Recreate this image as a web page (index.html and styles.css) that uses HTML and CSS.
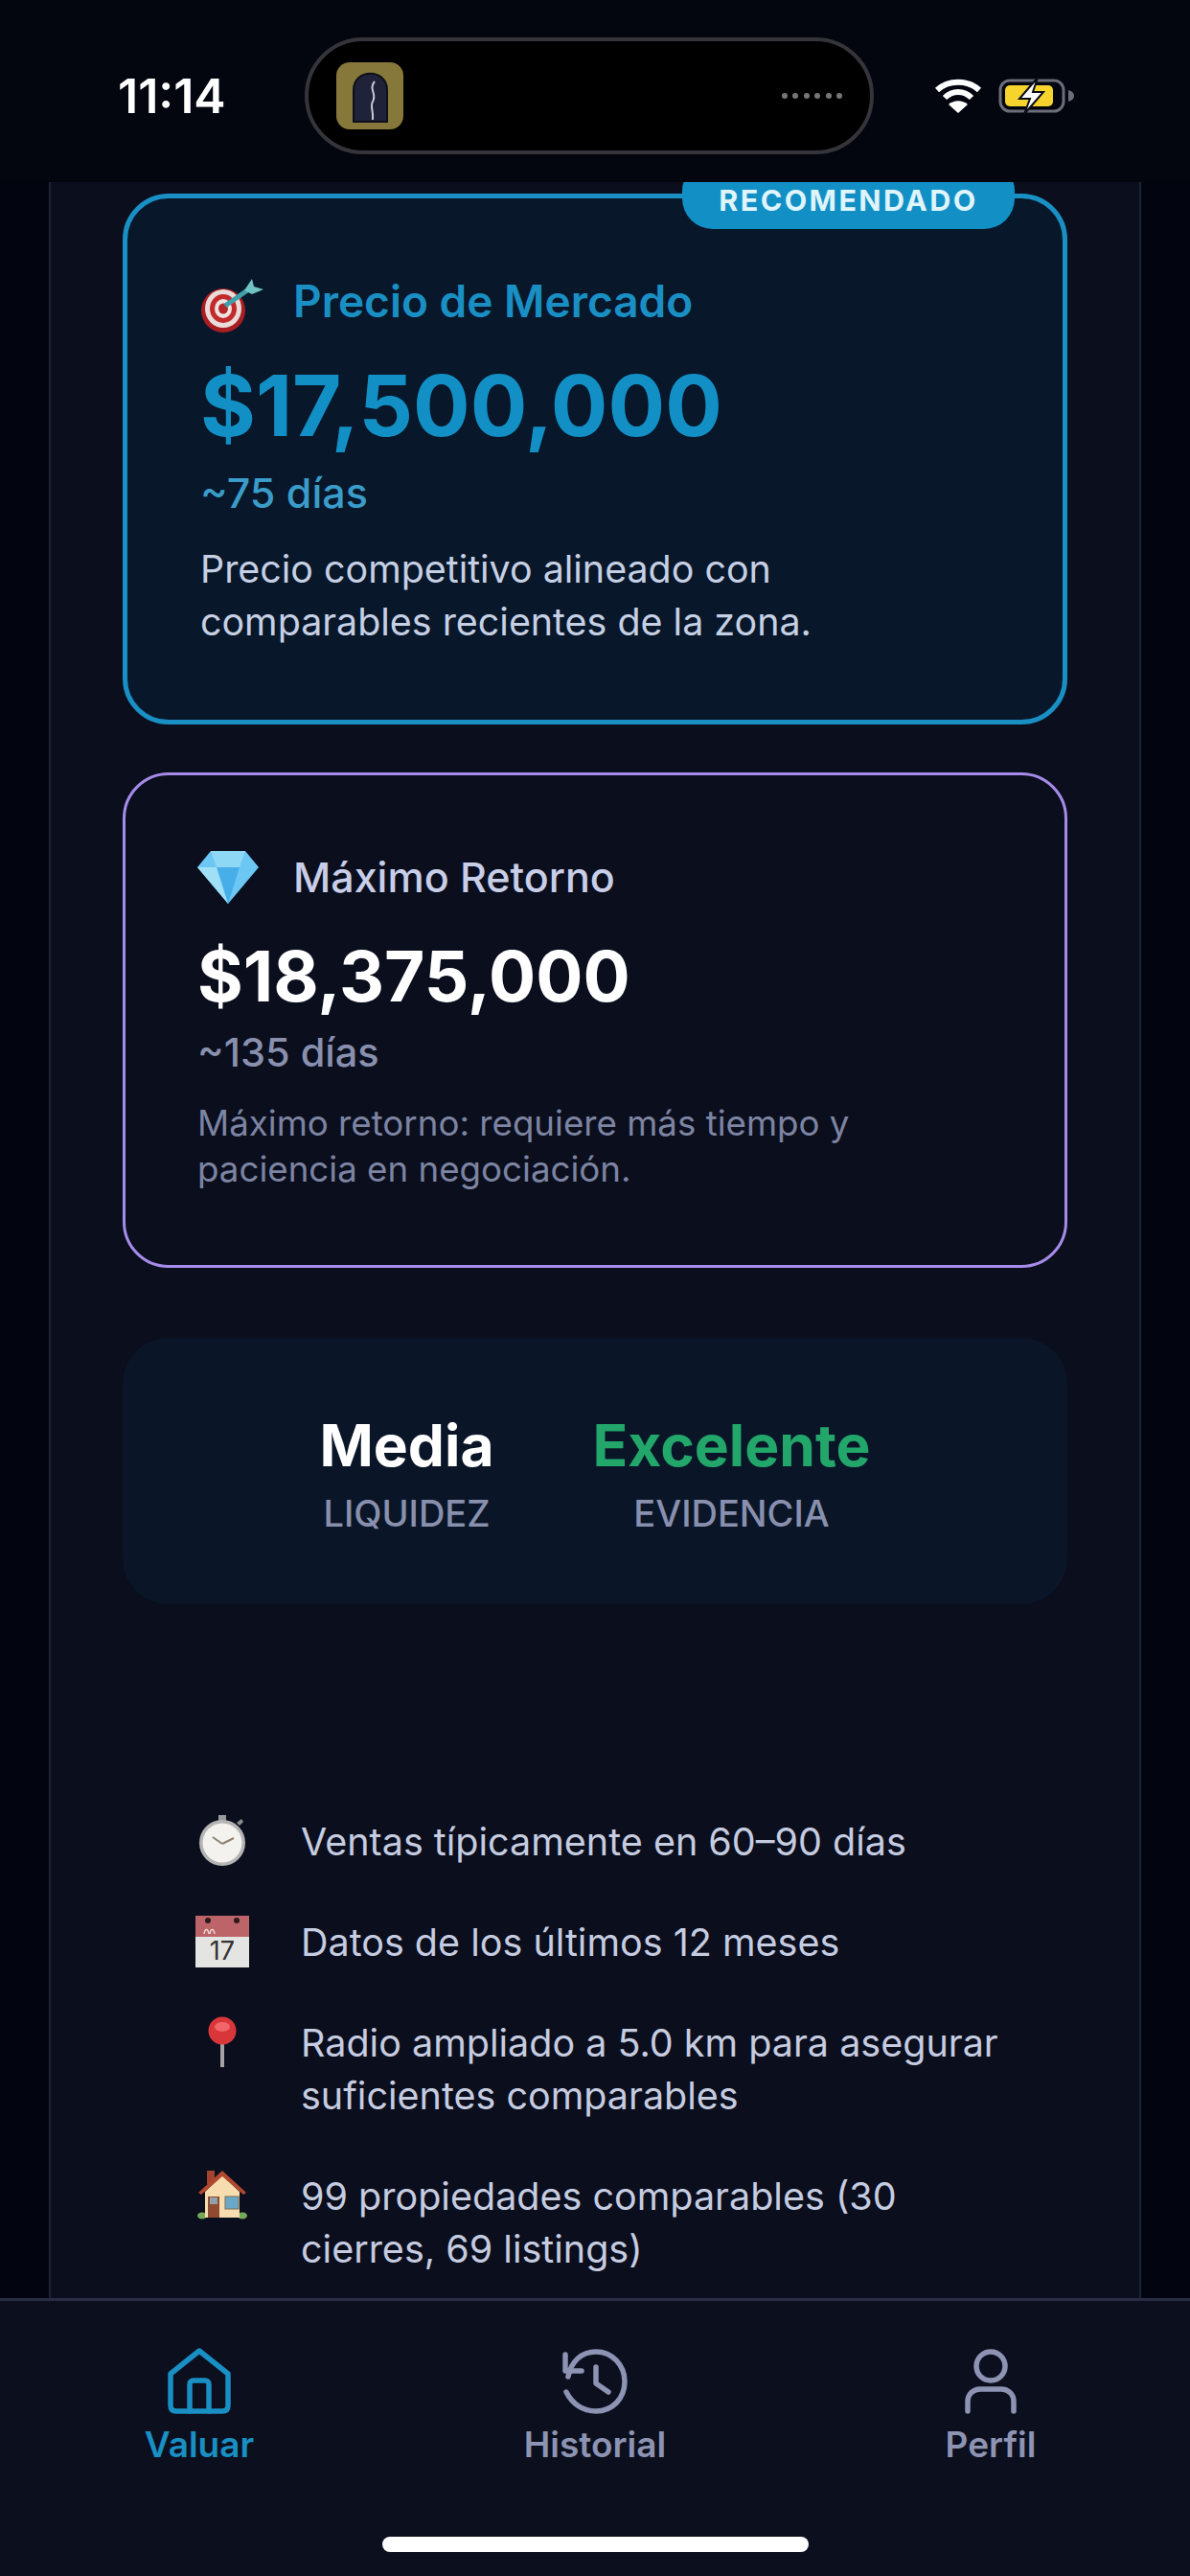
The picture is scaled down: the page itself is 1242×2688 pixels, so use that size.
FILE: index.html
```html
<!DOCTYPE html>
<html lang="es">
<head>
    <meta charset="UTF-8">
    <meta name="viewport" content="width=device-width, initial-scale=1.0">
    <title>Valuar</title>
    <link rel="stylesheet" href="styles.css">
</head>
<body>

<header class="status-bar">
    <span class="time">11:14</span>
    <div class="island">
        <div class="app-icon">
            <svg viewBox="0 0 70 70" width="70" height="70">
                <path d="M18 62V29C18 6 53 6 53 29V62Z" fill="#1f2238" stroke="#0e0f1c" stroke-width="2"/>
                <path d="M40 20C33 28 43 33 38 41C35 46 39 50 38 60" fill="none" stroke="#c9cbd6" stroke-width="2"/>
            </svg>
        </div>
        <div class="island-dots"><i></i><i></i><i></i><i></i><i></i><i></i></div>
    </div>
    <div class="status-icons">
        <svg viewBox="0 0 50 38" width="50" height="38">
            <path d="M3 13C15 2 35 2 47 13" fill="none" stroke="#fff" stroke-width="6"/>
            <path d="M11 21C19 13 31 13 39 21" fill="none" stroke="#fff" stroke-width="6"/>
            <path d="M25 37L15 28C21 23 29 23 35 28Z" fill="#fff"/>
        </svg>
        <svg viewBox="0 0 80 40" width="80" height="40">
            <rect x="2" y="4" width="66" height="32" rx="10" fill="none" stroke="#6b6d78" stroke-width="3"/>
            <rect x="7" y="9" width="50" height="22" rx="5" fill="#f6d32d"/>
            <path d="M73 14C77 15 79 17 79 20C79 23 77 25 73 26Z" fill="#6b6d78"/>
            <path d="M41 1L22 23H33L27 39L47 16H36Z" fill="#fff" stroke="#0a0c18" stroke-width="2"/>
        </svg>
    </div>
</header>

<main class="content">
    <section class="card card-market">
        <span class="badge">RECOMENDADO</span>
        <div class="card-head">
            <svg class="card-emoji emoji-target" viewBox="0 0 66 56" width="66" height="56">
                <circle cx="24" cy="33" r="23" fill="#a81e22"/>
                <ellipse cx="24" cy="31" rx="19" ry="20" fill="#e9dcd8"/>
                <ellipse cx="24" cy="31" rx="14" ry="15" fill="#c22a2c"/>
                <ellipse cx="24" cy="31" rx="9" ry="10" fill="#efe3df"/>
                <ellipse cx="24" cy="31" rx="5" ry="5.5" fill="#b3262a"/>
                <path d="M26 28L52 10" stroke="#3f9ea8" stroke-width="5"/>
                <path d="M46 12L54 0L56 8L66 11L54 16Z" fill="#6fc3c4"/>
            </svg>
            <h2 class="card-title">Precio de Mercado</h2>
        </div>
        <p class="price">$17,500,000</p>
        <p class="days">~75 días</p>
        <p class="desc">Precio competitivo alineado con<br>comparables recientes de la zona.</p>
    </section>

    <section class="card card-max">
        <div class="card-head">
            <svg class="card-emoji" viewBox="0 0 64 56" width="64" height="56">
                <path d="M14 1H50L64 18L32 56L0 18Z" fill="#6cc8f2"/>
                <path d="M14 1H50L44 18H20Z" fill="#8ed8f5"/>
                <path d="M20 18H44L32 56Z" fill="#47aeea"/>
                <path d="M0 18H20L32 56Z" fill="#9fe0f7"/>
            </svg>
            <h2 class="card-title">Máximo Retorno</h2>
        </div>
        <p class="price">$18,375,000</p>
        <p class="days">~135 días</p>
        <p class="desc">Máximo retorno: requiere más tiempo y<br>paciencia en negociación.</p>
    </section>

    <section class="stats">
        <div class="stat">
            <span class="stat-value">Media</span>
            <span class="stat-label">LIQUIDEZ</span>
        </div>
        <div class="stat">
            <span class="stat-value stat-good">Excelente</span>
            <span class="stat-label">EVIDENCIA</span>
        </div>
    </section>

    <ul class="facts">
        <li class="fact">
            <svg class="fact-icon" viewBox="0 0 56 54" width="56" height="54">
                <rect x="24" y="0" width="8" height="6" fill="#9a9a9a"/>
                <path d="M43 8L48 4L50 7L46 11Z" fill="#8d8d8d"/>
                <circle cx="28" cy="29" r="24" fill="#b4b4b4"/>
                <circle cx="28" cy="29" r="20.5" fill="#f4f2ef"/>
                <path d="M28 30L18 23M28 30L40 24" stroke="#8c8270" stroke-width="2" fill="none"/>
            </svg>
            <span>Ventas típicamente en 60–90 días</span>
        </li>
        <li class="fact">
            <svg class="fact-icon" viewBox="0 0 56 54" width="56" height="54">
                <rect x="0" y="0" width="56" height="54" fill="#e4e4e2"/>
                <rect x="0" y="0" width="56" height="22" fill="#bd6468"/>
                <circle cx="13" cy="5" r="3" fill="#2b1a1c"/>
                <circle cx="43" cy="5" r="3" fill="#2b1a1c"/>
                <path d="M9 19C10 13 13 13 14 19M15 19C16 13 19 13 20 19" fill="none" stroke="#edd5d5" stroke-width="1.5"/>
                <text class="cal-day" x="28" y="46" text-anchor="middle">17</text>
            </svg>
            <span>Datos de los últimos 12 meses</span>
        </li>
        <li class="fact">
            <svg class="fact-icon" viewBox="0 0 56 54" width="56" height="54">
                <rect x="26" y="24" width="4" height="29" fill="#a7a3a3"/>
                <circle cx="28" cy="15" r="14.5" fill="#d9363a"/>
                <ellipse cx="28" cy="11" rx="8" ry="5" fill="#f0666a"/>
            </svg>
            <span>Radio ampliado a 5.0 km para asegurar<br>suficientes comparables</span>
        </li>
        <li class="fact">
            <svg class="fact-icon" viewBox="0 0 56 54" width="56" height="54">
                <ellipse cx="7" cy="48" rx="5" ry="3.5" fill="#76a957"/>
                <ellipse cx="49" cy="48" rx="5" ry="3.5" fill="#76a957"/>
                <rect x="12" y="1" width="8" height="14" fill="#a3422e"/>
                <path d="M10 23L28 6L46 23V50H10Z" fill="#f6dcae"/>
                <path d="M3 24L28 1L53 24L50 26L28 7L6 26Z" fill="#b2482f"/>
                <rect x="13" y="28" width="12" height="22" fill="#8f4a32"/>
                <rect x="15" y="29" width="8" height="7" fill="#8fa2a8"/>
                <rect x="31" y="28" width="14" height="13" fill="#69a9c7" stroke="#7c6a55"/>
            </svg>
            <span>99 propiedades comparables (30<br>cierres, 69 listings)</span>
        </li>
    </ul>
</main>

<nav class="tab-bar">
    <div class="tabs">
        <a class="tab tab-active">
            <svg viewBox="0 0 66 70" width="66" height="70" fill="none" stroke="currentColor" stroke-width="5.5" stroke-linejoin="round" stroke-linecap="round">
                <path d="M3 27L33 3L63 27V60C63 64 61 66 57 66H9C5 66 3 64 3 60Z"/>
                <path d="M23 66V38C23 35 25 34 27 34H39C41 34 43 35 43 38V66"/>
            </svg>
            <span>Valuar</span>
        </a>
        <a class="tab">
            <svg viewBox="0 0 68 70" width="68" height="70" fill="none" stroke="currentColor" stroke-width="5.5" stroke-linecap="round" stroke-linejoin="round">
                <path d="M6 30C9 14 20 4 35 4C52 4 65 18 65 35C65 53 52 66 35 66C21 66 10 58 4 46"/>
                <path d="M3 7V24H20"/>
                <path d="M35 20V37L48 46"/>
            </svg>
            <span>Historial</span>
        </a>
        <a class="tab">
            <svg viewBox="0 0 54 68" width="54" height="68" fill="none" stroke="currentColor" stroke-width="5.5" stroke-linecap="round">
                <circle cx="27" cy="18" r="15"/>
                <path d="M3 65V55C3 47 9 42 16 42H38C45 42 51 47 51 55V65"/>
            </svg>
            <span>Perfil</span>
        </a>
    </div>
    <div class="home-bar"></div>
</nav>

</body>
</html>
```

FILE: styles.css
```css
* { box-sizing: border-box; }

body {
    margin: 0;
    width: 1242px;
    height: 2688px;
    display: flex;
    flex-direction: column;
    overflow: hidden;
    background: #02040f;
    font-family: 'Inter', 'Liberation Sans', sans-serif;
    color: #fff;
}

/* --- status bar --- */
.status-bar {
    height: 190px;
    flex: none;
    display: flex;
    align-items: center;
    padding: 0 120px 0 123px;
    background: #03060f;
}

.time { font-size: 50px; font-weight: 600; width: 195px; margin-top: 10px; }

.island {
    width: 594px;
    height: 122px;
    margin-top: 10px;
    background: #000;
    border: 4px solid #34343a;
    border-radius: 61px;
    display: flex;
    align-items: center;
    justify-content: space-between;
    padding: 0 29px 0 29px;
}

.app-icon {
    width: 70px;
    height: 70px;
    background: #85783a;
    border-radius: 14px;
}

.island-dots { display: flex; gap: 5.5px; }
.island-dots i { width: 6px; height: 6px; border-radius: 50%; background: #77777a; }

.status-icons {
    display: flex;
    align-items: center;
    gap: 17px;
    margin-left: auto;
    margin-top: 10px;
}

/* --- scrolled content --- */
.content {
    flex: 1;
    min-height: 0;
    overflow: hidden;
    margin: 0 51px;
    padding: 12px 75px 0;
    background: #0a0e1d;
    border-left: 2px solid #1d2236;
    border-right: 2px solid #1d2236;
}

.card { position: relative; }

.card-market {
    height: 554px;
    padding: 74px 76px 0;
    background: #08172a;
    border: 5px solid #1a8fc4;
    border-radius: 48px;
}

.badge {
    position: absolute;
    top: -29px;
    right: 50px;
    width: 347px;
    height: 61px;
    display: flex;
    align-items: center;
    justify-content: center;
    background: #1290c6;
    border-radius: 20px 20px 32px 32px;
    font-size: 30.5px;
    font-weight: 700;
    letter-spacing: 2.4px;
    color: #dff4fb;
}

.card-head { display: flex; align-items: center; }

.card-emoji { flex: none; }
.emoji-target { margin-top: 10px; }

.card-market .card-head { gap: 31px; }

.card-title { margin: 0; font-weight: 600; }
.card-market .card-title { font-size: 46px; color: #1a8fc4; }

.price { margin: 0; font-weight: 700; }
.card-market .price { font-size: 88.5px; line-height: 100px; margin-top: 26px; color: #1290c6; }

.days { margin: 0; font-weight: 500; }
.card-market .days { font-size: 43px; line-height: 50px; margin-top: 16px; color: #3a9cc9; }

.desc { margin: 0; }
.card-market .desc { font-size: 39.4px; line-height: 55px; margin-top: 28px; color: #c6d0e4; }

.card-max {
    height: 517px;
    margin-top: 50px;
    padding: 78px 75px 0;
    background: #0a0e1d;
    border: 3px solid #a78bea;
    border-radius: 48px;
}

.card-max .card-head { gap: 36px; }
.card-max .card-title { font-size: 43px; font-weight: 500; color: #c8cee8; }
.card-max .price { font-size: 73px; line-height: 86px; margin-top: 33px; color: #fff; }
.card-max .days { font-size: 41.5px; line-height: 46px; margin-top: 13px; color: #8990ae; }
.card-max .desc { font-size: 36.7px; line-height: 48px; margin-top: 27px; color: #7d84a2; }

/* --- liquidez / evidencia --- */
.stats {
    height: 278px;
    margin-top: 73px;
    display: flex;
    justify-content: center;
    align-items: center;
    gap: 103px;
    padding-top: 3px;
    background: #0a1628;
    border-radius: 48px;
}

.stat { display: flex; flex-direction: column; align-items: center; }
.stat-value { font-size: 60.5px; line-height: 72px; font-weight: 700; color: #fff; }
.stat-good { color: #22a66a; }
.stat-label { font-size: 38px; line-height: 46px; margin-top: 12px; font-weight: 500; color: #8990ae; }

/* --- facts --- */
.facts {
    list-style: none;
    margin: 221px 0 0;
    padding: 0 0 0 76px;
    display: flex;
    flex-direction: column;
    gap: 50px;
}

.fact {
    display: flex;
    align-items: flex-start;
    gap: 54px;
    font-size: 39.5px;
    line-height: 55px;
    color: #c6cce0;
}

.fact-icon { flex: none; margin-top: -1px; }
.cal-day { font-family: 'Inter', sans-serif; font-size: 27px; fill: #333; }

/* --- bottom nav --- */
.tab-bar {
    height: 290px;
    flex: none;
    background: #0b0f1e;
    border-top: 3px solid #282d45;
    position: relative;
}

.tabs {
    display: flex;
    padding: 49px 110px 0 110px;
    justify-content: space-between;
}

.tab {
    width: 196px;
    display: flex;
    flex-direction: column;
    align-items: center;
    gap: 9px;
    color: #8d93b2;
    font-size: 37px;
    line-height: 44px;
    font-weight: 600;
}

.tab svg { height: 70px; }
.tab-active { color: #1a8fc4; }

.home-bar {
    position: absolute;
    left: 399px;
    bottom: 25px;
    width: 445px;
    height: 16px;
    border-radius: 8px;
    background: #fff;
}
```
